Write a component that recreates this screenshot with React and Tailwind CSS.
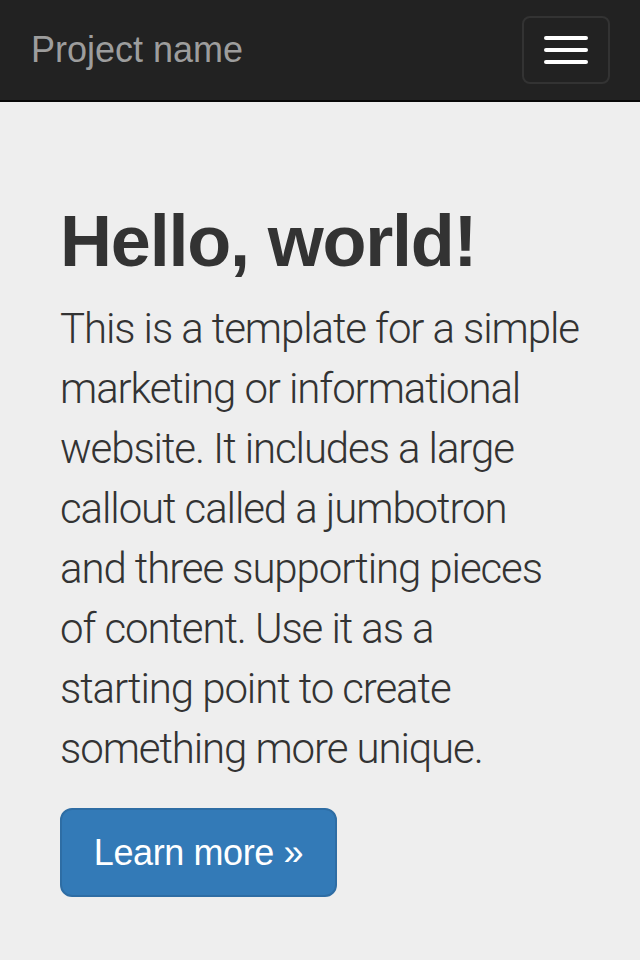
export default function App() {
  return (
    <div className="min-h-[960px] bg-[#eeeeee] font-['Liberation_Sans',Arial,sans-serif] text-[#333333]">
      {/* Navbar */}
      <nav className="h-[102px] bg-[#222222] border-b-2 border-[#080808]">
        <div className="h-[100px] pl-[31px] pr-[30px] flex items-center justify-between">
          <a href="#" className="text-[36px] leading-none text-[#9d9d9d]">Project name</a>
          <button className="w-[88px] h-[68px] mt-[-1px] rounded-[8px] border-2 border-[#333333] flex flex-col items-center justify-center gap-[8px]">
            <span className="block w-[44px] h-[4px] rounded-[2px] bg-white" />
            <span className="block w-[44px] h-[4px] rounded-[2px] bg-white" />
            <span className="block w-[44px] h-[4px] rounded-[2px] bg-white" />
          </button>
        </div>
      </nav>

      {/* Jumbotron */}
      <div className="px-[60px] pt-[60px] pb-[60px]">
        <h1 className="mt-[40px] text-[72px] leading-[79px] font-bold tracking-[-1.2px]">Hello, world!</h1>
        <p className="mt-[18px] text-[42px] leading-[60px] font-light font-['Roboto',sans-serif] tracking-[-1.1px] whitespace-nowrap">
          This is a template for a simple<br />
          marketing or informational<br />
          website. It includes a large<br />
          callout called a jumbotron<br />
          and three supporting pieces<br />
          of content. Use it as a<br />
          starting point to create<br />
          something more unique.
        </p>
        <p className="mt-[29px]">
          <a href="#" className="w-[277px] h-[89px] flex items-center justify-center rounded-[12px] border-2 border-[#2e6da4] bg-[#337ab7] text-white text-[36px] tracking-[-0.4px]">
            Learn more »
          </a>
        </p>
      </div>
    </div>
  );
}
